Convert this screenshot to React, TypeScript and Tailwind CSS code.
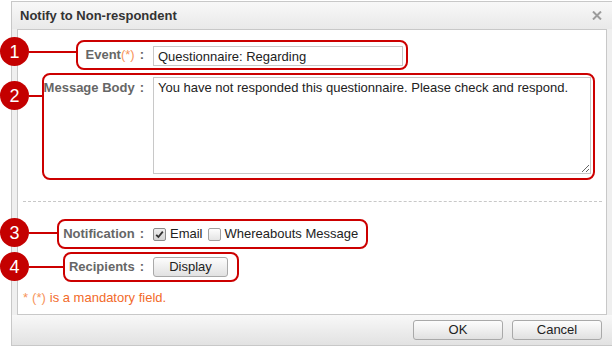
import React from 'react';

const RED = 'border-[#cc0000]';

function Badge({ n, pos, line }: { n: number; pos: string; line: string }) {
  return (
    <div className={`absolute right-full flex items-center ${pos}`}>
      <div className="flex h-[29px] w-[29px] items-center justify-center rounded-full bg-[#c40000] text-[18px] leading-none text-white">
        {n}
      </div>
      <div className={`h-[2px] bg-[#cc0000] ${line}`} />
    </div>
  );
}

function Label({ width, children }: { width: string; children: React.ReactNode }) {
  return (
    <div className={`flex shrink-0 justify-end whitespace-nowrap font-bold text-[#666] ${width}`}>
      {children}
      <span className="ml-[5px]">:</span>
    </div>
  );
}

function Check({ checked }: { checked?: boolean }) {
  return (
    <span
      className={`flex h-[13px] w-[13px] items-center justify-center rounded-[2px] border ${
        checked
          ? 'border-[#8c8c8c] bg-gradient-to-b from-[#eeeeee] to-[#d4d4d4]'
          : 'border-[#a2a2a2] bg-gradient-to-b from-[#fdfdfd] to-[#e4e4e4]'
      }`}
    >
      {checked && (
        <svg width="9" height="9" viewBox="0 0 9 9">
          <path d="M1.2 4.8 L3.4 7 L7.8 1.6" fill="none" stroke="#333" strokeWidth="1.8" />
        </svg>
      )}
    </span>
  );
}

const btn =
  'flex h-[20px] items-center justify-center rounded-[3px] border border-[#a9a9a9] bg-gradient-to-b from-[#fdfdfd] to-[#e1e1e1] text-[13px] text-[#222]';

export default function App() {
  return (
    <div className="h-[346px] w-[612px] overflow-hidden bg-white pt-[1px] font-['Liberation_Sans',Arial,sans-serif] text-[13px] text-[#222]">
      <div className="flex h-[345px] w-[601px] ml-[11px] flex-col border-y border-l border-[#c8c8c8] bg-[#efefef]">
        {/* title bar */}
        <div className="flex h-[27px] shrink-0 items-center justify-between bg-gradient-to-b from-[#f8f8f8] to-[#e9e9e9] pl-[8px] pr-[10px]">
          <span className="font-bold text-[#333]">Notify to Non-respondent</span>
          <svg width="10" height="9" viewBox="0 0 10 9">
            <path d="M1 0.5 L9 8.5 M9 0.5 L1 8.5" stroke="#9c9c9c" strokeWidth="2" />
          </svg>
        </div>

        {/* body */}
        <div className="mx-[5px] h-[286px] shrink-0 border border-[#c8c8c8] bg-white pt-[10px]">
          <div className="flex">
            <div className={`relative ml-[58px] flex h-[30px] items-center rounded-[8px] border-2 ${RED} pr-[3px]`}>
              <Badge n={1} pos="top-[-5px]" line="w-[49px]" />
              <Label width="w-[66px]">
                Event<span className="font-normal text-[#f7945a]">(*)</span>
              </Label>
              <input
                readOnly
                defaultValue="Questionnaire: Regarding"
                className="ml-[9px] mt-[2px] h-[20px] w-[250px] border border-[#c8c8c8] px-[4px] text-[13px] text-[#222] outline-none"
              />
            </div>
          </div>

          <div className="mt-[3px] flex">
            <div className={`relative ml-[24px] flex h-[107px] items-start rounded-[8px] border-2 ${RED} pr-[2px]`}>
              <Badge n={2} pos="top-[6px]" line="w-[15px]" />
              <div className="mt-[5px] leading-[16px]">
                <Label width="w-[100px]">Message Body</Label>
              </div>
              <textarea
                readOnly
                defaultValue="You have not responded this questionnaire. Please check and respond."
                className="ml-[9px] mt-[2px] h-[97px] w-[438px] resize border border-[#c8c8c8] px-[4px] pt-[2px] text-[13px] leading-[16px] text-[#222] outline-none"
              />
            </div>
          </div>

          <div className="ml-[5px] mr-[4px] mt-[21px] border-t border-dashed border-[#c8c8c8]" />

          <div className="mt-[17px] flex">
            <div className={`relative ml-[39px] flex h-[30px] items-center rounded-[8px] border-2 ${RED} pr-[8px]`}>
              <Badge n={3} pos="top-[-3px]" line="w-[30px]" />
              <Label width="w-[85px]">Notification</Label>
              <div className="ml-[9px] flex items-center">
                <Check checked />
                <span className="ml-[4px]">Email</span>
                <span className="ml-[5px]">
                  <Check />
                </span>
                <span className="ml-[4px]">Whereabouts Message</span>
              </div>
            </div>
          </div>

          <div className="mt-[3px] flex">
            <div className={`relative ml-[45px] flex h-[30px] items-center rounded-[8px] border-2 ${RED} pr-[9px]`}>
              <Badge n={4} pos="top-[-2px]" line="w-[36px]" />
              <Label width="w-[79px]">Recipients</Label>
              <button className={`ml-[9px] w-[75px] ${btn}`}>Display</button>
            </div>
          </div>

          <div className="ml-[5px] mt-[8px] leading-[16px] text-[#f26a2a]">
            <span className="text-[#f7945a]">*</span>
            <span className="ml-[4px] text-[#f7945a]">(*)</span>
            <span className="ml-[4px]">is a mandatory field.</span>
          </div>
        </div>

        {/* footer */}
        <div className="flex h-[30px] shrink-0 items-center justify-end gap-[9px] bg-gradient-to-b from-[#f8f8f8] to-[#e2e2e2] pr-[10px]">
          <button className={`w-[90px] ${btn}`}>OK</button>
          <button className={`w-[90px] ${btn}`}>Cancel</button>
        </div>
      </div>
    </div>
  );
}
